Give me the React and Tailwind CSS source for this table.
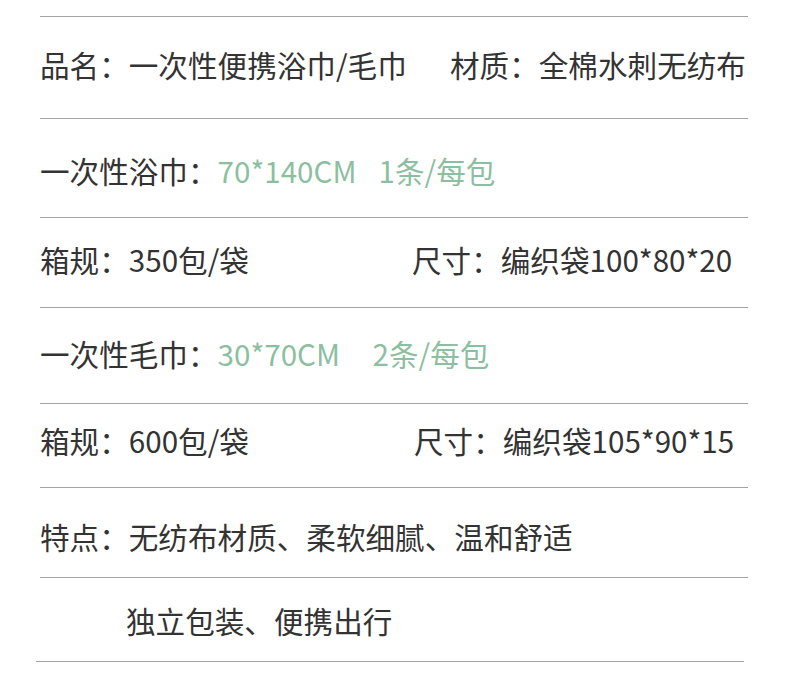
import React from "react";

const Line = ({ className = "ml-[40px] w-[708px]" }) => (
  <div className={`h-px bg-[#a3a3a3] ${className}`} />
);

export default function App() {
  return (
    <div
      className="w-[790px] h-[684px] bg-white text-[#333333] text-[29.6px] leading-none"
      style={{ fontFamily: '"Noto Sans CJK SC", "Noto Sans", sans-serif' }}
    >
      <div className="h-[16px]" />
      <Line />
      <div className="h-[101px] flex items-center pl-[40px] pb-[5px]">
        <span className="w-[410px]">品名：一次性便携浴巾/毛巾</span>
        <span>材质：全棉水刺无纺布</span>
      </div>
      <Line />
      <div className="h-[98px] flex items-center pl-[40px] pt-[6px]">
        <span>一次性浴巾：</span>
        <span className="text-[#8cbf9f] w-[161px]">70*140CM</span>
        <span className="text-[#8cbf9f]">1条/每包</span>
      </div>
      <Line />
      <div className="h-[89px] flex items-center pl-[40px] pb-[6px]">
        <span className="w-[372px]">箱规：350包/袋</span>
        <span>尺寸：编织袋100*80*20</span>
      </div>
      <Line />
      <div className="h-[95px] flex items-center pl-[40px] pb-[3px]">
        <span>一次性毛巾：</span>
        <span className="text-[#8cbf9f] w-[155px]">30*70CM</span>
        <span className="text-[#8cbf9f]">2条/每包</span>
      </div>
      <Line />
      <div className="h-[83px] flex items-center pl-[40px] pb-[10px]">
        <span className="w-[374px]">箱规：600包/袋</span>
        <span>尺寸：编织袋105*90*15</span>
      </div>
      <Line />
      <div className="h-[89px] flex items-center pl-[40px] pt-[8px]">
        <span>特点：无纺布材质、柔软细腻、温和舒适</span>
      </div>
      <Line />
      <div className="h-[83px] flex items-center pl-[126px] pt-[2px]">
        <span>独立包装、便携出行</span>
      </div>
      <Line className="ml-[36px] w-[708px]" />
    </div>
  );
}
